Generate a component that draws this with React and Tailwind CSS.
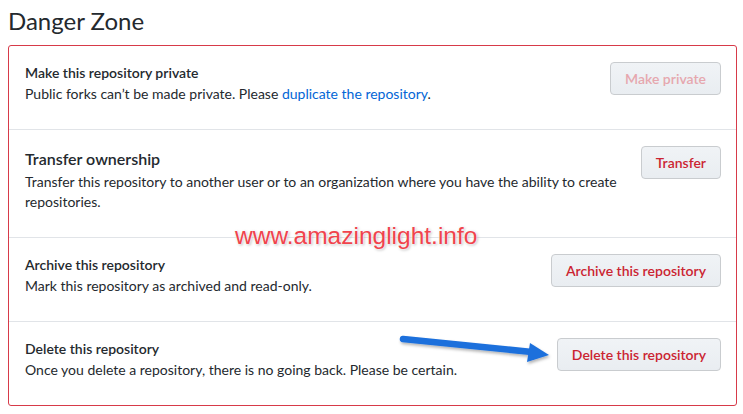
import React from 'react';

const rows = [
  {
    id: 'private',
    title: 'Make this repository private',
    desc: (
      <>
        Public forks can’t be made private. Please{' '}
        <a href="#" className="text-[#0366d6]">duplicate the repository</a>.
      </>
    ),
    button: 'Make private',
    disabled: true,
  },
  {
    id: 'transfer',
    title: 'Transfer ownership',
    big: true,
    desc: 'Transfer this repository to another user or to an organization where you have the ability to create repositories.',
    button: 'Transfer',
  },
  {
    id: 'archive',
    title: 'Archive this repository',
    desc: 'Mark this repository as archived and read-only.',
    button: 'Archive this repository',
  },
  {
    id: 'delete',
    title: 'Delete this repository',
    desc: 'Once you delete a repository, there is no going back. Please be certain.',
    button: 'Delete this repository',
  },
];

const DangerButton = ({ children, disabled }) => (
  <button
    className={`shrink-0 h-[33px] px-[14px] rounded-[4px] border border-[#c9cccf] bg-gradient-to-b from-[#f0f3f6] to-[#e9edf1] text-[14px] font-semibold ${
      disabled ? 'text-[#e6a7ae]' : 'text-[#cb2431]'
    }`}
  >
    {children}
  </button>
);

const App = () => {
  return (
    <div className="relative w-[743px] h-[414px] bg-white overflow-hidden text-[#24292e] font-['Segoe_UI','Lato','Noto_Sans',sans-serif]">
      <div className="px-2 pt-[6px]">
        <h2 className="text-[24px] leading-[30px] font-normal text-[#24292e] mb-[9px]">Danger Zone</h2>
        <div className="w-[729px] border border-[#d73a49] rounded-[3px]">
          {rows.map((row, i) => (
            <div
              key={row.id}
              className={`flex items-start justify-between gap-4 pl-4 pr-[15px] pt-4 pb-[25px] ${
                i > 0 ? 'border-t border-[#e1e4e8]' : ''
              }`}
            >
              <div>
                <p
                  className={
                    row.big
                      ? 'text-[16px] leading-[26px] font-semibold'
                      : 'text-[14px] leading-[21px] font-semibold'
                  }
                >
                  {row.title}
                </p>
                <p className={`text-[14px] ${row.big ? 'leading-[20px]' : 'leading-[21px]'}`}>{row.desc}</p>
              </div>
              <DangerButton disabled={row.disabled}>{row.button}</DangerButton>
            </div>
          ))}
        </div>
      </div>

      {/* watermark */}
      <div className="absolute left-[235px] top-[224px] text-[24.5px] leading-none text-[#f0434c] font-['Liberation_Sans',Arial,sans-serif] [text-shadow:0_0_2px_#fff,0_0_3px_#fff,1px_1px_3px_rgba(0,0,0,0.35)]">
        www.amazinglight.info
      </div>

      {/* blue arrow */}
      <svg className="absolute left-0 top-0 pointer-events-none" width="743" height="414">
        <defs>
          <filter id="sh" x="-10%" y="-50%" width="120%" height="200%">
            <feDropShadow dx="1" dy="2" stdDeviation="1.5" floodColor="#000" floodOpacity="0.3" />
          </filter>
        </defs>
        <g filter="url(#sh)">
          <line x1="403" y1="339" x2="532" y2="352" stroke="#1b6fdc" strokeWidth="6.5" strokeLinecap="round" />
          <polygon points="530,343 549,355 527,362" fill="#1b6fdc" />
        </g>
      </svg>
    </div>
  );
};

export default App;
